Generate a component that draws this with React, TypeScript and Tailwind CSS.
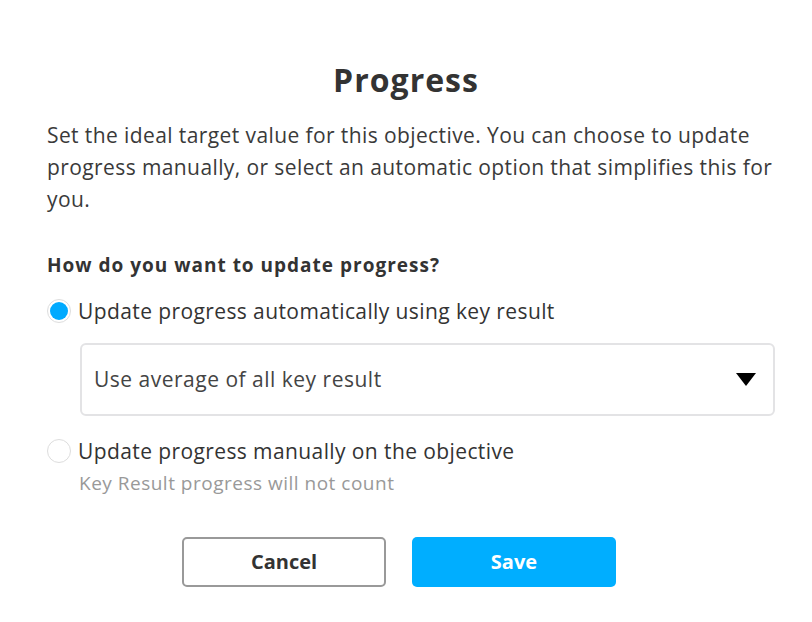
import React from "react";

export default function App() {
  return (
    <div
      className="w-[812px] h-[622px] bg-white text-[#333] overflow-hidden"
      style={{ fontFamily: "'Open Sans', Lato, sans-serif" }}
    >
      <div className="pt-[60px] px-[47px]">
        <h1 className="text-center text-[32px] font-bold leading-[40px] tracking-[1px] text-[#333]">Progress</h1>
        <p className="mt-[19px] mr-[-14px] text-[21px] leading-[32px] tracking-[0.4px] text-[#3a3a3a]">
          Set the ideal target value for this objective. You can choose to update progress manually, or select an automatic option that simplifies this for you.
        </p>
        <h2 className="mt-[37px] text-[19px] font-bold leading-[26px] tracking-[1px]">How do you want to update progress?</h2>
        <div className="mt-[21px] flex items-center gap-[7px] h-[24px]">
          <span className="w-[24px] h-[24px] rounded-full border border-[#ddd] flex items-center justify-center shrink-0">
            <span className="w-[18px] h-[18px] rounded-full bg-[#00aaff]" />
          </span>
          <span className="text-[21px] leading-[24px] tracking-[0.4px]">Update progress automatically using key result</span>
        </div>
        <div className="mt-[20px] ml-[33px] w-[695px] h-[73px] rounded-[6px] border-2 border-[#e3e3e5] flex items-center justify-between pl-[12px] pr-[17px]">
          <span className="text-[21px] tracking-[0.5px] text-[#444]">Use average of all key result</span>
          <svg width="20" height="13" viewBox="0 0 20 13"><path d="M0 0h20L10 13z" fill="#000" /></svg>
        </div>
        <div className="mt-[23px] flex items-center gap-[7px] h-[24px]">
          <span className="w-[24px] h-[24px] rounded-full border border-[#ddd] shrink-0" />
          <span className="text-[21px] leading-[24px] tracking-[0.4px]">Update progress manually on the objective</span>
        </div>
        <div className="mt-[8px] ml-[32px] text-[19px] leading-[24px] tracking-[0.5px] text-[#999]">Key Result progress will not count</div>
        <div className="mt-[42px] flex justify-center gap-[26px] pr-[14px]">
          <button className="w-[204px] h-[50px] rounded-[5px] border-2 border-[#999] bg-white text-[20px] font-bold text-[#333]">Cancel</button>
          <button className="w-[204px] h-[50px] rounded-[5px] bg-[#00aeff] text-[20px] font-bold text-white">Save</button>
        </div>
      </div>
    </div>
  );
}
